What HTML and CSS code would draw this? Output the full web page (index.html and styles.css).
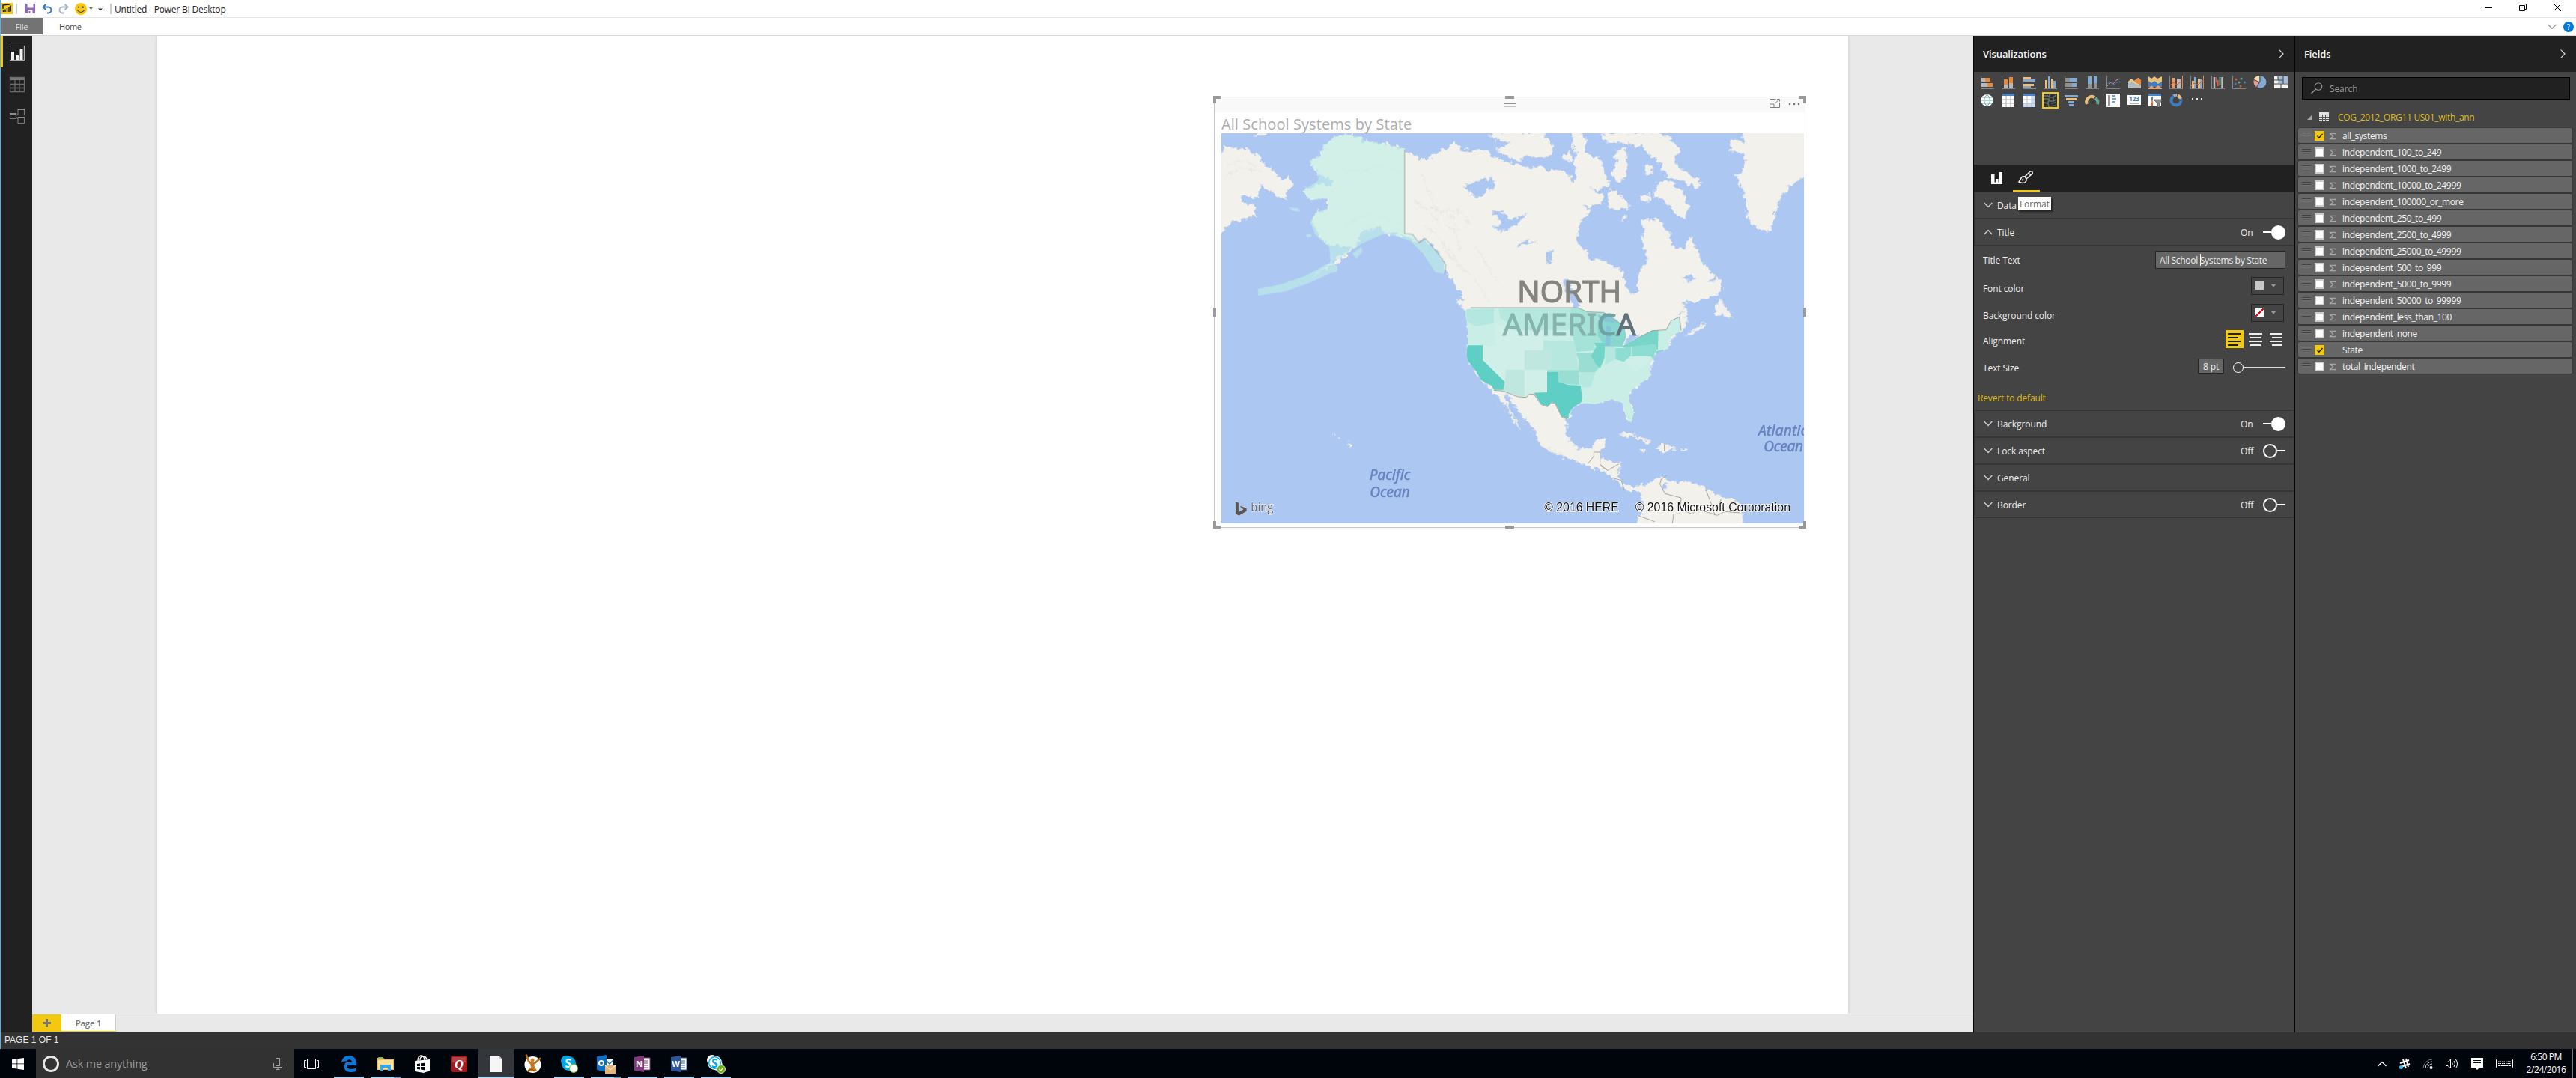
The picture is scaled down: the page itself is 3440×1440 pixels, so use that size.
FILE: index.html
```html
<!DOCTYPE html>
<html lang="en">
<head>
<meta charset="utf-8">
<title>Untitled - Power BI Desktop</title>
<link rel="stylesheet" href="styles.css">
</head>
<body>
<svg width="0" height="0" class="defs">
  <symbol id="sigma" viewBox="0 0 10 10"><path d="M9 2.500V1H1l4 4-4 4h8V7.500" fill="none" stroke="#a8a8a8" stroke-width="1.400"/></symbol>
  <symbol id="grip" viewBox="0 0 12 5"><path d="M0 .5h12M0 3.500h12" stroke="#404040" fill="none"/><path d="M0 1.500h12M0 4.500h12" stroke="#7d7d7d" fill="none" opacity=".5"/></symbol>
  <symbol id="down" viewBox="0 0 12 8"><path d="M.7 1l5.300 5.500L11.300 1" fill="none" stroke="#cfcfcf" stroke-width="1.300"/></symbol>
  <symbol id="check" viewBox="0 0 13 13"><path d="M3.500 6.500l2.300 2.700L10.500 4" fill="none" stroke="#1a1a1a" stroke-width="1.400"/></symbol>
  <symbol id="axes" viewBox="0 0 18 18"><path d="M.5 0v17.500H18" fill="none" stroke="#858585"/></symbol>
  <symbol id="skype" viewBox="0 0 24 24"><circle cx="8" cy="8" r="7"/><circle cx="15" cy="15" r="7"/><circle cx="11.500" cy="11.500" r="9.500"/></symbol>
</svg>
<div class="app">
  <header class="titlebar">
    <svg class="logo" width="15" height="15" viewBox="0 0 15 15"><path fill="#f2c811" d="M0 0h15v15H0z"/><path d="M2 8V3l8-1v1M2.500 10v2M5 8.500V12M7.500 7v5M10 5v7" stroke="#222" stroke-width="1.500" fill="none"/><path d="M12.500 3.500v8" stroke="#222" fill="none"/></svg>
    <i class="sep"></i>
    <svg class="save" width="13" height="13" viewBox="0 0 13 13"><path d="M0 0h13v13H0z" fill="#9266b8"/><path d="M2.500 0h8v5.500h-8z" fill="#fff"/><path d="M3.500 8.500h6V13h-6z" fill="#fff"/><path d="M4.500 10h2v3h-2z" fill="#9266b8"/></svg>
    <svg class="undo" width="14" height="14" viewBox="0 0 14 14"><path d="M1.500 4.500h7a4 4 0 0 1 0 8H7M5.500.7l-4 3.800 4 3.800" fill="none" stroke="#3b7ac0" stroke-width="2"/></svg>
    <svg class="redo" width="14" height="14" viewBox="0 0 14 14"><path d="M12.500 4.500h-7a4 4 0 0 0 0 8H7M8.500.7l4 3.800-4 3.800" fill="none" stroke="#a6b4cb" stroke-width="2"/></svg>
    <svg class="smile" width="16" height="16" viewBox="0 0 16 16"><circle cx="8" cy="8" r="8" fill="#f9c80e"/><circle cx="5.200" cy="5.600" r="1.200" fill="#333"/><circle cx="10.800" cy="5.600" r="1.200" fill="#333"/><path d="M3 9.500q5 6 10 0" fill="none" stroke="#333" stroke-width="1.100"/></svg>
    <svg class="drop1" width="5" height="3" viewBox="0 0 5 3"><path d="M0 0h5L2.500 3z" fill="#666"/></svg>
    <svg class="drop2" width="6" height="6" viewBox="0 0 6 6"><path d="M0 .5h6" stroke="#333"/><path d="M0 2.500h6L3 5.500z" fill="#333"/></svg>
    <i class="sep"></i>
    <span class="doc-title">Untitled - Power BI Desktop</span>
    <div class="window-controls">
      <svg width="10" height="10" viewBox="0 0 10 10"><path d="M0 5.500h10" stroke="#000"/></svg>
      <svg width="10" height="10" viewBox="0 0 10 10"><path d="M.5 2.500h7v7h-7zM2.500 2.500v-2h7v7h-2" fill="none" stroke="#000"/></svg>
      <svg width="10" height="10" viewBox="0 0 10 10"><path d="M0 0l10 10M10 0L0 10" stroke="#000"/></svg>
    </div>
  </header>
  <nav class="ribbon">
    <span class="file">File</span><span class="home">Home</span>
    <svg class="expand" width="12" height="8" viewBox="0 0 12 8"><path d="M.7 1L6 6.300 11.300 1" fill="none" stroke="#9a9a9a" stroke-width="1.300"/></svg>
    <span class="help">?</span>
  </nav>
  <main class="workspace">
    <aside class="views">
      <span class="view active"><svg width="20" height="20" viewBox="0 0 20 20"><path d="M.5.500h19v19H.500z" fill="none" stroke="#e8e8e8"/><path d="M19.300 1v18.300H1" fill="none" stroke="#9a9a9a"/><path d="M2 8h4v11H2zM8 13h4v6H8zM13.500 4h4v15h-4z" fill="#f2f2f2"/></svg></span>
      <span class="view"><svg width="20" height="20" viewBox="0 0 20 20"><path d="M0 0h20v4H0z" fill="#7c7c7c"/><path d="M.5.500h19v19H.500zM7 4v15M13 4v15M1 9.500h18M1 14.500h18" fill="none" stroke="#6c6c6c" stroke-width="1.300"/></svg></span>
      <span class="view"><svg width="20" height="20" viewBox="0 0 20 20"><path d="M.5 6.500h8v7h-8zM11 .500h8.500v8H11zM11 11.500h8.500v8H11z" fill="none" stroke="#777" stroke-width="1.200"/><path d="M0 7h9M11 1h9M11 12h9" stroke="#8c8c8c" stroke-width="1.800"/><path d="M8.500 9.500l2.500-2M8.500 11l2.500 3" stroke="#777"/></svg></span>
    </aside>
    <section class="report">
      <div class="canvas">
        <div class="page">
          <article class="visual">
            <i class="h tl"></i><i class="h tm"></i><i class="h tr"></i><i class="h ml"></i><i class="h mr"></i><i class="h bl"></i><i class="h bm"></i><i class="h br"></i>
            <div class="visual-bar">
              <svg class="drag" width="16" height="5" viewBox="0 0 16 5"><path d="M0 .500h16M0 4h16" stroke="#909090" stroke-width="1.100"/></svg>
              <svg class="focus" width="14" height="12" viewBox="0 0 14 12"><path d="M8.500.500h-8v11h13V5M.500 7h5.500v4.500M8 5.500L13 .700M10 .500h3.500v3" fill="none" stroke="#7d7d7d"/></svg>
              <svg class="dots" width="16" height="4" viewBox="0 0 16 4"><circle cx="2" cy="2" r="1.300" fill="#777"/><circle cx="8" cy="2" r="1.300" fill="#777"/><circle cx="14" cy="2" r="1.300" fill="#777"/></svg>
            </div>
            <h1 class="visual-title">All School Systems by State</h1>
            <svg class="map" width="778" height="521" viewBox="63 174 2334 1563">
              <defs>
                <filter id="coast" x="-5%" y="-5%" width="110%" height="110%"><feTurbulence type="fractalNoise" baseFrequency=".05" numOctaves="3" seed="4"/><feDisplacementMap in="SourceGraphic" scale="34" xChannelSelector="R" yChannelSelector="G"/><feGaussianBlur stdDeviation="1.600"/></filter>
                <filter id="soft"><feGaussianBlur stdDeviation="1.500"/></filter>
              </defs>
              <path d="M63 174h2334v1563H63z" fill="#acc7f2"/>
              <g filter="url(#coast)">
                <g fill="#f3f1eb">
                  <path d="M40 285L75 228 150 235 205 262 240 300 285 330 300 360 330 350 358 385 325 400 320 440 290 430 240 395 220 375 208 430 150 425 145 455 190 455 200 505 110 530 40 590zM190 186l25-16h35l-8 12z"/>
                  <path d="M797 238L740 222 640 205 620 190 560 178 520 190 470 225 462 262 415 285 430 315 455 340 510 365 500 385 450 375 392 402 415 440 490 435 492 475 445 490 425 530 460 590 500 625 560 625 590 630 510 690 420 755 560 670 610 620 620 570 700 545 720 575 797 585z"/>
                  <path d="M790 234L870 285 900 270 930 250 960 240 1000 205 1020 240 1060 245 1110 240 1160 270 1210 290 1320 320V900H1075L1045 850 1005 790 965 735 950 690 930 650 880 595 850 610 790 580z"/>
                  <g transform="translate(1140)">
                    <path d="M-60 245L-30 262 0 280 50 290 45 320 110 325 150 320 155 365 170 320 190 305 240 325 310 325 335 375 345 330 330 290 345 260 325 210 335 170 370 170 385 200 380 240 410 270 430 265 445 290 450 320 480 370 475 390 440 395 455 455 410 460 400 490 365 520 350 580 350 620 380 640 390 680 440 680 530 725 545 790 570 825 590 800 590 740 630 690 620 640 605 600 620 560 605 520 680 520 690 550 720 575 735 630 780 640 800 590 820 620 850 690 880 730 910 745 935 795 910 820 830 850 770 850 730 890 700 930H-60z"/>
                    <path d="M10 170H215L255 235 235 275 150 265 110 285 20 240 80 215 10 195zM440 185L490 170H680L740 210 765 245 740 270 745 305 800 340 845 370 830 400 790 375 720 350 690 330 680 290 640 260 600 225 540 215 470 210zM670 375L700 360 770 400 795 470 780 520 740 490 700 450 655 420zM500 240L545 240 550 350 510 370 485 330 505 290zM290 270L315 240 332 280 300 290zM480 395L520 420 565 470 540 475 500 480 470 465zM520 515l20-15v10l-12 12zM620 305h25l5 30-28 5zM600 425l40-8 5 25-40 8zM-5 185l30-15 60 8-20 18-40 5z"/>
                    <path d="M1015 160H1280V340L1210 375 1165 430 1140 500 1120 575 1070 555 1030 510 1025 440 1000 380 975 340 1010 330 1020 260 955 245 970 195 1012 215z"/>
                  </g>
                  <g transform="translate(930 840)">
                    <path d="M70 0H960L990 20 1000 60 990 112 970 130 940 150 925 190 875 215 862 240 850 260 850 310 800 345 770 370 765 400 785 455 775 490 755 470 740 415 700 400 630 415 578 412 540 435 524 478 515 480 515 540 560 600 620 595 625 565 680 555 660 600 650 640 735 655 725 700 735 735 780 755 820 740 825 768 760 765 700 715 650 685 600 665 530 640 450 610 405 580 395 530 350 480 300 410 265 370 285 440 335 525 310 500 275 430 228 375 175 325 120 245 120 60z"/>
                    <path d="M990 150L1040 110 1078 88 1050 120 1000 150zM1105 60L1130-5 1150 30 1190 80 1145 65zM720 540L760 528 860 572 830 575 790 548zM870 605L905 578 955 600 910 608zM812 600h20v8h-20zM975 600h22v7h-22zM815 760L850 725 905 705 930 730 1010 730 1070 750 1110 780 1190 800 1225 850 1220 920H780L820 850z"/>
                  </g>
                  <path d="M572 1414l10 6-5 9-9-5zM510 1378l8 2v5l-8-2zM533 1390l10 6-7 3z"/>
                </g>
                <g fill="#acc7f2">
                  <path d="M1035 385L1090 365 1150 350 1162 385 1090 430 1060 415z"/>
                  <g transform="translate(1140)"><path d="M10 490L50 488 80 520 150 495 110 540 50 565 5 550 50 535zM102 638L130 602 190 608 130 618zM225 655L252 640 240 695 228 695zM290 758L312 760 362 870 340 880 300 800zM770 745h50l5 12-35 8zM870 770l40-28-10 25zM395 388l60 20 10 12-40-10zM360 462l50 6-10 10z"/></g>
                  <g transform="translate(930 840)"><path d="M745 175l25-30 40-8-10 18-50 32zM960 65l25-30-10 25zM895 745l20-15 5 20-15 15z"/></g>
                </g>
              </g>
              <g fill="none" stroke="#d9d8d0" stroke-width="3" opacity=".55" filter="url(#coast)">
                <path d="M540 320q60 20 120-5t120 20M560 540q60-40 100-40t120 30M600 620l60-70 60 10M860 330l40 90 20 60 60 20 30 60M830 440l60 40 50 60 60 20 20 80M900 470l120 20 50 60M870 540l60 40 50 90 60 60M960 620l60 80 60 60 60 90M1080 620l50 90 60 80M90 300l70-20 50 40M80 350l60-40 80 20M1170 1260l120 90 60 80 80 30"/>
              </g>
              <g fill="#beefe6" fill-opacity=".63" filter="url(#soft)">
                <path d="M797 238L740 222 640 205 620 190 560 178 520 190 470 225 462 262 415 285 430 315 455 340 450 365 392 402 415 440 490 435 492 475 445 490 418 530 440 580 495 630 500 690 400 745 300 780 210 798V825L320 808 420 772 500 735 525 730 530 710 510 690 560 660 605 628 660 600 720 575 760 585 820 605 870 655 920 730 955 738 962 700 930 655 880 595 855 614 828 578 797 575z"/>
                <path d="M333 470l40 5 6 14-30-4zM400 580l20-5 5 12-15 5zM588 655l35-25 5 18-25 28z"/>
              </g>
              <path d="M797 238V576L828 578 855 614 880 595 930 655 962 700 958 738" fill="none" stroke="#8f9a94" stroke-width="2.500"/>
              <g transform="translate(930 840)" filter="url(#soft)">
                <path fill="#c9eee6" d="M133 33L560 33 600 50 665 52 715 80 748 110 755 150 740 188 800 155 860 125 915 122 935 85 968 70 975 125 935 150 920 185 925 197 875 210 862 240 850 260 850 310 800 345 770 370 765 400 785 455 775 495 755 470 740 415 700 400 630 420 578 415 540 435 524 478 497 470 470 415 455 412 440 428 415 420 385 378 365 378 355 392 320 388 262 367 225 362 215 345 175 325 155 290 120 245 115 215 120 180 120 120 110 45z"/>
                <path fill="#b4e7df" d="M113 40L225 35V95L150 108 118 90zM670 190H712V240L670 262z"/>
                <path fill="#b7e8e0" d="M242 35H535V122H300L285 95 250 75zM422 165H545L565 281H452V204H422z"/>
                <path fill="#d0efe9" d="M230 95L300 125H422V203H348V280H270L268 330 180 243V183H235zM347 283H438V372H365L347 388zM750 245L800 228 850 232 845 255 790 290z"/>
                <path fill="#bfe7df" d="M347 204H452V281H347zM275 282H347V388H320L262 367 268 330z"/>
                <path fill="#a5e2d8" d="M533 35L560 35 600 50 660 52 640 100 640 145 665 175H625L632 205 555 210 535 122z"/>
                <path fill="#88d6d0" d="M665 52L715 80 748 110 755 150 740 188H670L640 145 640 90z"/>
                <path fill="#83b9dc" opacity=".6" d="M675 105L695 110 690 185 670 185zM640 60L690 75 720 95 650 85z"/>
                <path fill="#9addd3" d="M553 213H615L645 275 630 292H565V245zM438 283H565L568 342 520 340 482 330V291H438z"/>
                <path fill="#b7e8df" d="M565 292H632L612 352H572z"/>
                <path fill="#73d4c9" d="M625 174H670L668 235 650 277 635 262 613 225 635 190z"/>
                <path fill="#8eddd2" d="M712 195L740 195 775 185V225L745 250 712 240zM778 185L870 180 880 195 865 228H778zM855 228L868 215 865 245z"/>
                <path fill="#78d5c9" d="M735 190L800 155 860 123H884L882 205 870 180 775 188zM875 208L905 200 903 205 876 213z"/>
                <path fill="#5fcec4" d="M120 184H180V243L268 330 262 362H225L215 345 175 325 155 290 120 245 115 215zM438 291H482V330L520 342 572 345 578 390 575 412 540 435 524 460V478L497 470 470 415 455 412 440 428 415 420 385 374 438 372z"/>
                <path fill="none" stroke="#a2a8a2" stroke-width="3" d="M133 33H560L600 50 665 52 748 110M800 155L860 125 915 122 935 85 968 70 975 125M225 364L262 367 320 390 355 392 365 380H385L415 422 440 430 455 414 470 417 497 472 520 480"/>
                <path fill="none" stroke="#aaa69c" stroke-width="3" d="M650 612H625V628L600 660M650 612V660L680 685 725 660M650 665L680 685M700 715L735 725 748 765M908 580V608M918 705L895 720 890 740 910 778 975 795 972 840 1020 860 1040 840 1120 865 1150 850 1210 855M800 865L870 890M940 897L945 860 972 858M1075 765L1100 830 1110 865M1135 800L1120 840"/>
              </g>
              <g class="map-labels" filter="url(#soft)">
                <text class="land" x="1248" y="852" font-size="122" textLength="418" fill="#85857f" stroke="#85857f">NORTH</text>
                <text class="land" x="1190" y="984" font-size="122" textLength="534" lengthAdjust="spacingAndGlyphs" fill="#86b4ae" stroke="#86b4ae">AMERI<tspan fill="#6fa3a2" stroke="#6fa3a2">C</tspan><tspan fill="#62727c" stroke="#62727c">A</tspan></text>
                <g font-style="italic" fill="#6683bf" stroke="#6683bf" font-size="57">
                  <text x="656" y="1564" textLength="164">Pacific</text><text x="658" y="1631" textLength="160">Ocean</text>
                  <text x="2214" y="1387" textLength="196">Atlantic</text><text x="2236" y="1450" textLength="158">Ocean</text>
                </g>
              </g>
              <g transform="translate(119 1645)"><path d="M0 4L14 9V45L31 36 22 31 17 20 46 31V44L14 62 0 54z" fill="#555" stroke="#ccd9ee" stroke-width="2"/></g>
              <text class="bing" x="181" y="1690" textLength="90" lengthAdjust="spacingAndGlyphs">bing</text>
              <g class="credits"><text x="1357" y="1688" textLength="298" lengthAdjust="spacingAndGlyphs">© 2016 HERE</text><text x="1721" y="1688" textLength="622" lengthAdjust="spacingAndGlyphs">© 2016 Microsoft Corporation</text></g>
            </svg>
          </article>
        </div>
      </div>
      <div class="tabs"><span class="add"><svg width="11" height="11" viewBox="0 0 11 11"><path d="M5.500 0v11M0 5.500h11" stroke="#7a746a" stroke-width="3"/></svg></span><span class="tab">Page 1</span></div>
    </section>
    <aside class="viz">
      <div class="panel-head"><span>Visualizations</span><svg width="7" height="12" viewBox="0 0 7 12"><path d="M.7.700L6 6 .700 11.300" fill="none" stroke="#ddd" stroke-width="1.200"/></svg></div>
      <div class="gallery">
        <svg viewBox="0 0 18 18"><use href="#axes"/><path fill="#e8883a" d="M1 3h12v5H1zM9 10h7v5H9z"/><path fill="#b8b8b8" d="M1 3h5v5H1zM1 10h8v5H1z"/></svg>
        <svg viewBox="0 0 18 18"><use href="#axes"/><path fill="#e8883a" d="M3 5h5v7H3zM10 2h5v8h-5z"/><path fill="#b8b8b8" d="M3 12h5v5H3zM10 10h5v7h-5z"/></svg>
        <svg viewBox="0 0 18 18"><use href="#axes"/><path fill="#ecc07a" d="M1 2h10v3H1zM1 11h14v3H1z"/><path fill="#82aad2" d="M1 5h16v3H1zM1 14h10v2H1z"/></svg>
        <svg viewBox="0 0 18 18"><use href="#axes"/><path fill="#ecc07a" d="M2 6h3v11H2zM10 4h3v13h-3z"/><path fill="#82aad2" d="M6 1h3v16H6zM13 7h3v10h-3z"/></svg>
        <svg viewBox="0 0 18 18"><use href="#axes"/><path fill="#82aad2" d="M7 3h9v5H7zM10 10h6v5h-6z"/><path fill="#909090" d="M1 3h6v5H1zM1 10h9v5H1z"/></svg>
        <svg viewBox="0 0 18 18"><use href="#axes"/><path fill="#82aad2" d="M3 1h5v10H3zM11 1h5v9h-5z"/><path fill="#909090" d="M3 11h5v6H3zM11 10h5v7h-5z"/></svg>
        <svg viewBox="0 0 18 18"><use href="#axes"/><path fill="none" stroke="#d68e80" d="M1 14l5-5 3 2 4-5 5-2"/><path fill="none" stroke="#3f73b5" d="M1 11l4-3 5 4 4-3 4-1"/></svg>
        <svg viewBox="0 0 18 18"><path fill="#ecc98c" d="M1 8l4-4 4 3 5-4 4 3v8H1z"/><path fill="#e8883a" d="M9 8l5-5 4 3v7l-4-2z"/><path fill="#9abbd8" d="M1 10l6-1 7 4 4-1v5H1z"/><path fill="#bbb" d="M1 13l7-1 10 3v2H1z"/></svg>
        <svg viewBox="0 0 18 18"><path fill="#ecc07a" d="M0 1l4 3 4-3 4 3 6-3v11H0z"/><path fill="#3f7dc0" d="M0 7l4 3 4-3 5 4 5-3v7H0z"/><path fill="#eda070" d="M0 17l4-4 4 4 5-4 5 4v1H0z"/></svg>
        <svg viewBox="0 0 18 18"><use href="#axes"/><path fill="#e09a70" d="M3 3h5v14H3z"/><path fill="#bbb" d="M10 4h5v13h-5z"/><path d="M17.500 0v17" stroke="#e8883a"/><path d="M1 13l4-4 5 3 4-3 4-1" fill="none" stroke="#dd5638"/></svg>
        <svg viewBox="0 0 18 18"><use href="#axes"/><path fill="#82aad2" d="M5 2h3v15H5zM13 5h3v12h-3z"/><path fill="#ecc07a" d="M2 7h3v10H2zM10 4h3v13h-3z"/><path d="M17.500 0v17" stroke="#e8883a"/><path d="M1 14l4-4 5 2 4-3 4-3" fill="none" stroke="#dd5638"/></svg>
        <svg viewBox="0 0 18 18"><use href="#axes"/><path d="M4 2v15M14.500 2v15" stroke="#bbb" stroke-width="2.500"/><path d="M6.500 2v7" stroke="#d46" /><path d="M8.500 6v8" stroke="#dd5638" stroke-width="2.500"/><path d="M11.500 2v11" stroke="#66a792" stroke-width="2"/></svg>
        <svg viewBox="0 0 18 18"><use href="#axes"/><g fill="#dd5638"><circle cx="5" cy="5" r="1.500"/><circle cx="11" cy="14" r="1.500"/></g><g fill="#66a792"><circle cx="12" cy="4" r="1.500"/><circle cx="9" cy="9" r="1.500"/></g><g fill="#4a83c5"><circle cx="4" cy="11" r="1.500"/><circle cx="16.500" cy="9" r="1.500"/></g></svg>
        <svg viewBox="0 0 18 18"><circle cx="9.500" cy="8.500" r="8" fill="#82aad2"/><path fill="#f3dcae" d="M8 8V.300a8 8 0 0 0-7.500 5.500z"/><path fill="#ef9b92" d="M7 8.500L.700 6a9 9 0 0 0 3.500 9z"/><path d="M9 8L4 16M9 9L0 5M9 9V0" stroke="#444"/></svg>
        <svg viewBox="0 0 18 18"><path fill="#f4f4f4" d="M0 1h18v16H0z"/><path fill="#a0bcd8" d="M5 1h13v9H5z"/><path d="M0 6h12M0 11h18M5 1v5M12 1v10M9 11v6" stroke="#444"/></svg>
        <svg viewBox="0 0 18 18"><circle cx="8.500" cy="9" r="8" fill="#fff"/><path d="M8.500 1v16M.500 9h16M2 5h13M2 13h13M8.500 1q-8 8 0 16 8-8 0-16" fill="none" stroke="#76aaa7"/></svg>
        <svg viewBox="0 0 18 18"><path fill="#fff" d="M1 1h16v17H1z"/><path fill="#4a83c5" d="M1 0h16v3H1z"/><path d="M1 8h16M1 13h16M6 3v15M12 3v15" stroke="#aaa"/></svg>
        <svg viewBox="0 0 18 18"><path fill="#fff" d="M1 1h16v17H1z"/><path fill="#c8dcf0" d="M12 3h5v15h-5zM1 13h16v5H1z"/><path fill="#4a83c5" d="M1 0h16v3H1z"/><path d="M1 8h16M1 13h16M6 3v15M12 3v15" stroke="#b7bec4"/></svg>
        <svg class="picked" viewBox="0 0 18 18"><path fill="#2b302d" d="M0 0h18v18H0z"/><path d="M0 3h6l2 2h5l4-3M0 7h7v3h6l4-2M1 12l5 1 1 4 9-1M8 1v4M6 10v3M13 5v5M10 13l6-1" fill="none" stroke="#667069" stroke-width="1.700"/></svg>
        <svg viewBox="0 0 18 18"><path fill="#82aad2" d="M0 2h18v3H0zM5 10h8v3H5z"/><path fill="#ecc07a" d="M2 6h14v3H2z"/><path fill="#82aad2" d="M6 14h6v3H6z"/></svg>
        <svg viewBox="0 0 18 18"><path d="M2 14a7 7 0 0 1 10-9" fill="none" stroke="#ecc07a" stroke-width="4"/><path d="M13 6a7 7 0 0 1 3 8" fill="none" stroke="#66a792" stroke-width="4"/><path fill="#303030" d="M7 13l6-5-4 6z"/></svg>
        <svg viewBox="0 0 18 18"><path fill="#fff" d="M0 0h18v18H0z"/><path fill="#999" d="M2 2h3v14H2z"/><path d="M7 3h5M8 7h5M7 11h5" stroke="#4a83c5" stroke-width="1.500"/></svg>
        <svg viewBox="0 0 18 18"><path fill="#fff" d="M0 2h18v13H0z"/><path d="M3 13h12" stroke="#666"/><text x="9" y="10" class="n123">123</text></svg>
        <svg viewBox="0 0 18 18"><path fill="#fff" d="M0 0h17v17H0z"/><path fill="#4a83c5" d="M0 0h17v3H0zM3 5h3v3H3z"/><path fill="#e8883a" d="M3 9h3v3H3z"/><path fill="#dd5638" d="M3 13h3v3H3z"/><path fill="#888" stroke="#444" stroke-width=".6" d="M7 8h12l-4 5v5h-3v-5z"/></svg>
        <svg viewBox="0 0 18 18"><circle cx="9" cy="9" r="6.500" fill="none" stroke="#3f7dc0" stroke-width="4"/><path d="M9 2.500a6.500 6.500 0 0 1 6 4" fill="none" stroke="#ecc07a" stroke-width="4"/><path d="M9 2.500a6.500 6.500 0 0 0-4 1" fill="none" stroke="#82aad2" stroke-width="4"/><path d="M11 0L9.500 6M17 9h-5M4 2l3 4" stroke="#444"/></svg>
        <svg viewBox="0 0 18 18"><path d="M2 7h2M8 7h2M14 7h2" stroke="#eee" stroke-width="2"/></svg>
      </div>
      <div class="modes">
        <span class="mode"><svg width="15" height="17" viewBox="0 0 15 17"><path d="M0 2.500h4.500v11H6V9h3.500v4.500h1V0H15v16H0z" fill="#fff"/></svg></span>
        <span class="mode on"><svg width="20" height="18" viewBox="0 0 20 18"><path d="M8 8l7-7q2-1 3 1t-1 3l-7 6zM8 8q-4-1-5 2t-3 5q6 3 9 0 2-2 1-4zM13 3l3 3M6 11l-2 2" fill="none" stroke="#f2f2f2" stroke-width="1.500"/></svg></span>
      </div>
      <div class="row"><svg class="chev"><use href="#down"/></svg><span class="name">Data</span><span class="tip">Format</span></div>
      <div class="row"><svg class="chev up"><use href="#down"/></svg><span class="name">Title</span><span class="state">On</span><i class="toggle on"></i></div>
      <div class="props">
        <div class="prop p1"><label>Title Text</label><span class="input">All School <i class="caret"></i>Systems by State</span></div>
        <div class="prop p2"><label>Font color</label><span class="picker"><i class="swatch"></i><i class="tri"></i></span></div>
        <div class="prop p2"><label>Background color</label><span class="picker"><i class="swatch none"></i><i class="tri"></i></span></div>
        <div class="prop p3"><label>Alignment</label><span class="aligns">
          <svg class="sel" viewBox="0 0 24 24"><path d="M3 5h17M3 10h14M3 15h17M3 20h14"/></svg>
          <svg viewBox="0 0 24 24"><path d="M3 5h18M5 10h14M3 15h18M5 20h14"/></svg>
          <svg viewBox="0 0 24 24"><path d="M3 5h17M6 10h14M3 15h17M6 20h14"/></svg></span></div>
        <div class="prop p3"><label>Text Size</label><span class="size">8 pt</span><i class="slider"></i></div>
        <a class="revert">Revert to default</a>
      </div>
      <div class="row"><svg class="chev"><use href="#down"/></svg><span class="name">Background</span><span class="state">On</span><i class="toggle on"></i></div>
      <div class="row"><svg class="chev"><use href="#down"/></svg><span class="name">Lock aspect</span><span class="state">Off</span><i class="toggle"></i></div>
      <div class="row"><svg class="chev"><use href="#down"/></svg><span class="name">General</span></div>
      <div class="row"><svg class="chev"><use href="#down"/></svg><span class="name">Border</span><span class="state">Off</span><i class="toggle"></i></div>
    </aside>
    <aside class="fields">
      <div class="panel-head"><span>Fields</span><svg width="7" height="12" viewBox="0 0 7 12"><path d="M.7.700L6 6 .700 11.300" fill="none" stroke="#ddd" stroke-width="1.200"/></svg></div>
      <div class="search"><svg width="16" height="16" viewBox="0 0 16 16"><circle cx="10" cy="5.500" r="4.800" fill="none" stroke="#999" stroke-width="1.100"/><path d="M6.500 9L.500 15" stroke="#999" stroke-width="1.200"/></svg>Search</div>
      <div class="table"><svg class="fold" width="7" height="7" viewBox="0 0 7 7"><path d="M7 0v7H0z" fill="#aaa"/></svg><svg width="13" height="12" viewBox="0 0 13 12"><path fill="#e2e2e2" d="M0 0h13v12H0z"/><path d="M0 3.500h13M0 6.500h13M0 9.500h13M4.500 3v9M8.500 3v9" stroke="#555"/></svg><span>COG_2012_ORG11 US01_with_ann</span></div>
      <ul>
        <li><svg class="g"><use href="#grip"/></svg><svg class="box yes"><use href="#check"/></svg><svg class="s"><use href="#sigma"/></svg>all_systems</li>
        <li><svg class="g"><use href="#grip"/></svg><i class="box"></i><svg class="s"><use href="#sigma"/></svg>independent_100_to_249</li>
        <li><svg class="g"><use href="#grip"/></svg><i class="box"></i><svg class="s"><use href="#sigma"/></svg>independent_1000_to_2499</li>
        <li><svg class="g"><use href="#grip"/></svg><i class="box"></i><svg class="s"><use href="#sigma"/></svg>independent_10000_to_24999</li>
        <li><svg class="g"><use href="#grip"/></svg><i class="box"></i><svg class="s"><use href="#sigma"/></svg>independent_100000_or_more</li>
        <li><svg class="g"><use href="#grip"/></svg><i class="box"></i><svg class="s"><use href="#sigma"/></svg>independent_250_to_499</li>
        <li><svg class="g"><use href="#grip"/></svg><i class="box"></i><svg class="s"><use href="#sigma"/></svg>independent_2500_to_4999</li>
        <li><svg class="g"><use href="#grip"/></svg><i class="box"></i><svg class="s"><use href="#sigma"/></svg>independent_25000_to_49999</li>
        <li><svg class="g"><use href="#grip"/></svg><i class="box"></i><svg class="s"><use href="#sigma"/></svg>independent_500_to_999</li>
        <li><svg class="g"><use href="#grip"/></svg><i class="box"></i><svg class="s"><use href="#sigma"/></svg>independent_5000_to_9999</li>
        <li><svg class="g"><use href="#grip"/></svg><i class="box"></i><svg class="s"><use href="#sigma"/></svg>independent_50000_to_99999</li>
        <li><svg class="g"><use href="#grip"/></svg><i class="box"></i><svg class="s"><use href="#sigma"/></svg>independent_less_than_100</li>
        <li><svg class="g"><use href="#grip"/></svg><i class="box"></i><svg class="s"><use href="#sigma"/></svg>independent_none</li>
        <li><svg class="g"><use href="#grip"/></svg><svg class="box yes"><use href="#check"/></svg><svg class="s"></svg>State</li>
        <li><svg class="g"><use href="#grip"/></svg><i class="box"></i><svg class="s"><use href="#sigma"/></svg>total_independent</li>
      </ul>
    </aside>
  </main>
  <div class="status">PAGE 1 OF 1</div>
</div>
<footer class="taskbar">
  <span class="start"><svg width="16" height="16" viewBox="0 0 16 16"><path fill="#fff" d="M0 2.200l6.500-.9v6.200H0zM7.300 1.200L16 0v7.500H7.300zM0 8.300h6.500v6.300L0 13.700zM7.300 8.300H16V16l-8.700-1.200z"/></svg></span>
  <div class="cortana"><i class="ring"></i><span>Ask me anything</span><svg width="12" height="16" viewBox="0 0 12 16"><path d="M3.500.500h5v10h-5zM.500 7v5.500h11V7M6 12.500v3M3.500 15.500h5" fill="none" stroke="#a5a5a5"/></svg></div>
  <span class="task first"><svg width="20" height="14" viewBox="0 0 20 14"><path d="M4.500.500h11v13h-11zM3 2.500H.500v9H3M17 2.500h2.500v9H17" fill="none" stroke="#fff"/></svg></span>
  <span class="task run"><svg width="20" height="22" viewBox="0 0 20 22"><path fill="#0a78d7" d="M0 9C1 3 5 0 10 0c6 0 10 4 10 10v3H7c0 3 3 5 6 5 2 0 4-.5 6-1.500V21c-2 .700-4 1-7 1-6 0-9-4-8-9 .500-3 2-4 4-5C4 7 1 8 0 9zM7 9h7c0-5-7-5-7 0z"/></svg></span>
  <span class="task run two"><svg width="22" height="20" viewBox="0 0 22 20"><path fill="#e8c15c" d="M0 2h8l2 2h12v14H0z"/><path fill="#fce196" d="M1 5h20v12H1z"/><path fill="#33a8e8" d="M4 19v-8h14v8h-4v-4H8v4z"/><path fill="#61b564" d="M1 1h7v1.500H1z"/></svg></span>
  <span class="task"><svg width="22" height="24" viewBox="0 0 22 24"><path fill="none" stroke="#fff" stroke-width="1.300" d="M5 8q0-6 4-7t5 6M8 7q0-5 4-5t5 4"/><path fill="#fff" d="M1 8l20-2v15l-8 3-12-2z"/><path fill="#000510" d="M4 12l4-.5V15H4zM9 11.300l5-.6V15H9zM4 16h4v3.500L4 19zM9 16h5v4.200l-5-.6z"/></svg></span>
  <span class="task"><svg width="22" height="22" viewBox="0 0 22 22"><rect width="22" height="22" rx="3" fill="#9c1c22"/><path fill="#c45a5e" opacity=".6" d="M2 2h18v7H2z"/><text x="11" y="17" class="q">Q</text></svg></span>
  <span class="task active"><svg width="17" height="22" viewBox="0 0 17 22"><path fill="#f6f6f6" d="M0 0h12l5 5v17H0z"/><path fill="#bbb" d="M12 0l5 5h-5z"/></svg></span>
  <span class="task"><svg width="24" height="25" viewBox="0 0 24 25"><circle cx="12.500" cy="14" r="11" fill="#fff"/><path fill="none" stroke="#c06f18" stroke-width="2.600" stroke-linecap="round" stroke-linejoin="round" d="M4 1.500l3 8 4 3.500 4-1 7-6"/><path d="M9 11l5 .500 1 6 3 4-3 2-5-1-5 1.500 1-3 4-3z" fill="#c9781f"/><path d="M6 22l5-2 5 3" fill="none" stroke="#8a4a0c"/><circle cx="12" cy="8" r="2.500" fill="#cf7c20"/></svg></span>
  <span class="task run"><svg width="24" height="24" viewBox="0 0 24 24"><use href="#skype" fill="#00a9e8"/><text x="11" y="17" class="sk">S</text><circle cx="18" cy="18" r="5.500" fill="#fff" stroke="#7fba00"/></svg></span>
  <span class="task run two"><svg width="26" height="26" viewBox="0 0 26 26"><path fill="#fff" d="M12 6h11v10H12z"/><path fill="none" stroke="#1170c0" stroke-width="1.500" d="M13 8l5 5 5-5"/><path fill="#0d70c4" d="M1 3l13-2v23L1 21z"/><circle cx="7" cy="12" r="3" fill="none" stroke="#fff" stroke-width="2"/><path fill="#e8b574" d="M12 15h14v11H12z"/><path d="M12 15l7 6 7-6" fill="none" stroke="#fff"/></svg></span>
  <span class="task run"><svg width="24" height="24" viewBox="0 0 24 24"><path fill="#fff" stroke="#80397b" d="M12 4h10v16H12z"/><path d="M14 8h6M14 11h6M14 14h6M14 17h6" stroke="#80397b"/><path fill="#80397b" d="M1 3l13-2v22L1 21z"/><text x="7.500" y="16" class="of">N</text></svg></span>
  <span class="task run"><svg width="24" height="24" viewBox="0 0 24 24"><path fill="#fff" stroke="#2b579a" d="M12 4h10v16H12z"/><path d="M14 8h6M14 11h6M14 14h6M14 17h6" stroke="#2b579a"/><path fill="#2b579a" d="M1 3l13-2v22L1 21z"/><text x="7.500" y="16" class="of">W</text></svg></span>
  <span class="task run"><svg width="26" height="26" viewBox="0 0 26 26"><use href="#skype" width="24" height="24" fill="#fff"/><circle cx="11.500" cy="11.500" r="8.500" fill="#00a9e8"/><circle cx="11.500" cy="11.500" r="7" fill="#fff"/><text x="11.500" y="17.500" class="sk blue">S</text><circle cx="20" cy="20" r="5.500" fill="#6bb00b" stroke="#fff" stroke-width=".8"/><path d="M17.500 20l2 2 3-3.500" fill="none" stroke="#fff" stroke-width="1.200"/></svg></span>
  <div class="tray">
    <svg width="12" height="8" viewBox="0 0 12 8"><path d="M.5 7L6 1.500 11.500 7" fill="none" stroke="#fff" stroke-width="1.300"/></svg>
    <svg width="14" height="14" viewBox="0 0 14 14"><path d="M5 1l4 12M9 0l3 11M1 6l12-4M2 11l12-4" stroke="#fff" stroke-width="2"/><circle cx="2.500" cy="11.500" r="2.500" fill="#35c5f0"/></svg>
    <svg width="14" height="14" viewBox="0 0 14 14"><path d="M1 13A12 12 0 0 1 13 1" fill="none" stroke="#777"/><path d="M4 13a9 9 0 0 1 9-9M7 13a6 6 0 0 1 6-6" fill="none" stroke="#ddd"/><circle cx="11.500" cy="12" r="2" fill="#fff"/></svg>
    <svg width="17" height="14" viewBox="0 0 17 14"><path d="M.500 4.500H3L6.500 1v12L3 9.500H.500zM8.500 5q1.500 2 0 4M11 3q3 4 0 8M13.500 1q4 6 0 12" fill="none" stroke="#fff"/></svg>
    <svg width="16" height="16" viewBox="0 0 16 16"><path fill="#fff" d="M0 0h16v13h-5l-3 3-3-3H0z"/><path d="M3 3.500h10M3 6.500h10M3 9.500h6" stroke="#000510"/></svg>
    <svg width="23" height="13" viewBox="0 0 23 13"><rect x=".5" y=".5" width="22" height="12" rx="1" fill="none" stroke="#fff"/><path d="M3 4h17M3 6.500h17" stroke="#fff" stroke-dasharray="1.500 1"/><path d="M3 9.500h2M6.500 9.500h10M18 9.500h2" stroke="#fff"/></svg>
    <div class="clock"><span class="time">6:50 PM</span><span class="date">2/24/2016</span></div>
    <i class="peek"></i>
  </div>
</footer>
</body>
</html>
```
FILE: styles.css
```css
* { box-sizing: border-box; }
body { margin: 0; width: 3440px; height: 1440px; overflow: hidden; background: #fff; font-family: "Open Sans", "Noto Sans", sans-serif; font-size: 12px; color: #eee; display: flex; flex-direction: column; }
svg { display: block; flex: none; overflow: visible; }
svg.defs { position: absolute; }
.app { height: 1401px; flex: none; border-left: 1px solid #5cb0ee; display: flex; flex-direction: column; }

.titlebar { height: 24px; flex: none; display: flex; align-items: center; border-bottom: 1px solid #e6e6e6; padding-left: 1px; color: #333; }
.sep { width: 2px; height: 14px; background: #ccc; }
.logo { margin-right: 4px; }
.save { margin-left: 11px; }
.undo { margin-left: 9px; }
.redo { margin-left: 8px; }
.smile { margin-left: 8px; }
.drop1 { margin: 0 7px 0 3px; }
.drop2 { margin-right: 10px; }
.doc-title { margin: 1px 0 0 4px; font-size: 12px; color: #222; letter-spacing: -.2px; }
.window-controls { margin-left: auto; display: flex; gap: 36px; padding: 0 20px 4px 0; }

.ribbon { height: 24px; flex: none; display: flex; align-items: center; border-bottom: 1px solid #dadada; color: #444; font-size: 11px; }
.file { width: 56px; height: 22px; margin-bottom: 1px; background: #737373; color: #ddd; display: grid; place-items: center; letter-spacing: -.2px; }
.home { margin-left: 22px; letter-spacing: -.4px; }
.expand { margin-left: auto; }
.help { width: 14px; height: 14px; border-radius: 50%; background: #0078d7; color: #fff; margin: 0 3px 0 9px; font: 10px/14px "Open Sans", sans-serif; text-align: center; }

.workspace { flex: 1; display: flex; min-height: 0; }
.views { width: 42px; background: #212121; display: flex; flex-direction: column; }
.view { height: 42px; display: flex; align-items: center; padding: 3px 0 0 12px; }
.view.active { border-left: 3px solid #f2c811; padding-left: 9px; }

.report { flex: 1; display: flex; flex-direction: column; background: #e9e9e9; }
.canvas { height: 1307px; padding: 0 167px; border-bottom: 1px solid #f3f3f3; }
.page { height: 1306px; background: #fff; box-shadow: 0 0 5px rgba(0,0,0,.14); padding: 81px 0 0 1411px; clip-path: inset(0 -8px 0 -8px); }
.tabs { height: 24px; display: flex; border-bottom: 1px solid #888; }
.add { width: 39px; background: #f2c811; display: grid; place-items: center; }
.tab { width: 73px; background: #fff; border-bottom: 1px solid #f2c811; border-right: 1px solid #ccc; color: #777; display: grid; place-items: center; font: 600 11.500px "Open Sans", sans-serif; letter-spacing: -.3px; }

.visual { position: relative; width: 790px; height: 576px; border: 1px solid #c4c4c4; display: flex; flex-direction: column; }
.h { position: absolute; border: 0 solid #999; }
.tl, .tr, .bl, .br { width: 10px; height: 10px; }
.tl { left: -2px; top: -2px; border-width: 4px 0 0 4px; }
.tr { right: -2px; top: -2px; border-width: 4px 4px 0 0; }
.bl { left: -2px; bottom: -2px; border-width: 0 0 4px 4px; }
.br { right: -2px; bottom: -2px; border-width: 0 4px 4px 0; }
.tm, .bm { width: 12px; border-top-width: 4px; left: 388px; }
.tm { top: -2px; }
.bm { bottom: -2px; }
.ml, .mr { height: 12px; border-left-width: 4px; top: 281px; }
.ml { left: -2px; }
.mr { right: -2px; }
.visual-bar { height: 20px; flex: none; background: #f9f9f9; display: flex; align-items: center; padding-right: 6px; }
.drag { margin-left: 386px; }
.focus { margin: 0 11px 4px auto; }
.dots { margin-bottom: 2px; }
.visual-title { margin: 0; height: 28px; flex: none; padding-left: 9px; font: 400 20px/32px "Open Sans", sans-serif; letter-spacing: .08px; color: #adadad; white-space: nowrap; }
.map { margin-left: 9px; overflow: hidden; }
.map-labels text { font-family: "Noto Sans", sans-serif; stroke-width: 1.500px; }
.map-labels .land { stroke-width: 3px; }
.bing { font: 48px "Open Sans", sans-serif; fill: #666; stroke: #e8eef8; stroke-width: 4px; paint-order: stroke; }
.credits text { font: 49px "Liberation Sans", sans-serif; fill: #111; stroke: #fff; stroke-width: 5px; paint-order: stroke; }

.viz, .fields { background: #444; border-left: 1px solid #050505; display: flex; flex-direction: column; letter-spacing: -.1px; }
.viz { width: 429px; }
.fields { width: 376px; }
.panel-head { height: 48px; flex: none; background: #212121; display: flex; align-items: center; justify-content: space-between; padding: 0 14px 0 12px; font: 600 13px "Open Sans", sans-serif; color: #f5f5f5; }
.gallery { height: 124px; padding: 5px 0 0 9px; display: grid; grid-template-columns: repeat(15, 28px); grid-auto-rows: 18px; row-gap: 6px; align-content: start; }
.gallery svg { width: 18px; height: 18px; }
.gallery .picked { outline: 2px solid #f2c811; }
.n123 { font: 700 8px "Open Sans", sans-serif; fill: #3f7dc0; text-anchor: middle; }
.modes { height: 36px; background: #212121; display: flex; padding-left: 12px; }
.mode { width: 36px; display: grid; place-items: center; margin-right: 4px; }
.mode.on { border-bottom: 2px solid #f2c811; }
.row { height: 36px; border: 1px solid #363636; display: flex; align-items: center; padding: 0 11px 0 12px; }
.chev { width: 12px; height: 8px; margin-right: 6px; }
.chev.up { transform: scaleY(-1); }
.tip { background: #fff; color: #666; width: 44px; height: 18px; margin: -4px 0 0 2px; display: grid; place-items: center; box-shadow: 2px 2px 2px #222; }
.state { margin-left: auto; width: 30px; }
.toggle { width: 30px; height: 15px; display: flex; align-items: center; }
.toggle::before { content: ""; width: 15px; height: 15px; border: 2px solid #fff; border-radius: 50%; }
.toggle::after { content: ""; flex: 1; height: 2px; background: #fff; }
.toggle.on { flex-direction: row-reverse; }
.toggle.on::before { background: #fff; }
.props { height: 220px; }
.prop { display: flex; align-items: center; height: 36px; padding: 0 12px; }
.prop label { margin-right: auto; }
.p1 { height: 38px; }
.p2 label { padding-top: 2px; }
.p2 { padding-right: 14px; }
.p3 { padding-bottom: 1px; }
.input { width: 174px; height: 24px; background: #666; border: 1px solid #252525; display: flex; align-items: center; padding-left: 5px; white-space: pre; letter-spacing: -.3px; }
.caret { width: 1px; height: 16px; background: #fff; margin-right: -1px; }
.picker { width: 44px; height: 24px; border: 1px solid #252525; margin-bottom: 4px; display: flex; align-items: center; padding-left: 4px; }
.swatch { width: 13px; height: 13px; background: #c8c8c8; border: 1px solid #333; margin-bottom: 2px; }
.swatch.none { background: linear-gradient(135deg, #fff 44%, #f00 44%, #f00 58%, #fff 58%); }
.tri { border: 4px solid transparent; border-top-color: #999; border-bottom: 0; border-left-width: 3.500px; border-right-width: 3.500px; margin-left: 9px; }
.aligns { display: flex; gap: 4px; margin: 0 0 5px; }
.aligns svg { width: 24px; height: 24px; stroke: #eee; stroke-width: 2; }
.aligns .sel { background: #f2c811; stroke: #1d1d1d; }
.size { width: 35px; height: 20px; background: #666; border: 1px solid #252525; margin: 0 12px 5px 0; display: grid; place-items: center; }
.slider { width: 70px; height: 12px; display: flex; align-items: center; margin-bottom: 2px; }
.slider::before { content: ""; width: 12px; height: 12px; border: 1px solid #fff; border-radius: 50%; }
.slider::after { content: ""; flex: 1; height: 1px; background: #ddd; }
.revert { display: block; padding: 13px 0 0 5px; color: #dfbb1a; letter-spacing: -.15px; }

.search { height: 30px; margin: 7px 8px 0 9px; background: #212121; border: 1px solid #000; display: flex; align-items: center; gap: 9px; padding-left: 11px; color: #999; }
.table { height: 38px; padding: 8px 0 0 16px; display: flex; align-items: center; color: #dfbb1a; letter-spacing: -.3px; }
.table svg + svg { margin: 0 12px 0 9px; }
ul { list-style: none; margin: 0; padding: 0 5px 0 4px; display: grid; gap: 2px; letter-spacing: -.35px; }
li { height: 20px; background: #666; border-radius: 2px; box-shadow: 0 0 1px 1px #373737; display: flex; align-items: center; padding: 1px 0 0 5px; color: #f4f4f4; }
.g { width: 12px; height: 5px; margin: -4px 5px 0 0; }
.box { width: 13px; height: 13px; background: #fff; border: 2px solid #ccc; margin-right: 7px; }
.box.yes { background: #f2c811; border: 0; }
.s { width: 9px; height: 10px; margin-right: 8px; }

.status { height: 22px; flex: none; background: #333; padding-left: 5px; font: 12px/20px "Liberation Sans", sans-serif; color: #e6e6e6; }
.taskbar { height: 39px; flex: none; background: #00040b; display: flex; }
.start { width: 48px; display: grid; place-items: center; }
.cortana { width: 344px; background: #323232; display: flex; align-items: center; padding: 0 15px 0 9px; font-size: 14.500px; color: #9c9c9c; }
.cortana span { letter-spacing: -.2px; }
.cortana svg { margin-left: auto; }
.ring { width: 22px; height: 22px; border: 3px solid #e6e6e6; border-radius: 50%; margin-right: 9px; }
.task { width: 48px; margin-right: 1px; display: grid; place-items: center; background: linear-gradient(#a9d8f6, #a9d8f6) no-repeat 50% 100% / 0 2px; }
.task.first { margin-right: 2px; }
.task.run { background-size: 40px 2px; }
.task.two { background-image: linear-gradient(90deg, #a9d8f6 78%, #6b95b8 78%); }
.task.active { background-color: #33373c; background-size: 100% 2px; }
.q { font: italic 700 16px "Liberation Serif", serif; fill: #fff; text-anchor: middle; }
.sk { font: 700 16px "Open Sans", sans-serif; fill: #fff; text-anchor: middle; }
.sk.blue { fill: #00a9e8; }
.of { font: 700 11px "Open Sans", sans-serif; fill: #fff; text-anchor: middle; }
.tray { margin-left: auto; display: flex; align-items: center; gap: 17px; }
.clock { display: flex; flex-direction: column; align-items: center; width: 54px; line-height: 17px; margin-top: -2px; color: #fff; letter-spacing: -.45px; white-space: nowrap; }
.peek { width: 5px; height: 39px; border-left: 1px solid #777; margin-left: -9px; }
```
